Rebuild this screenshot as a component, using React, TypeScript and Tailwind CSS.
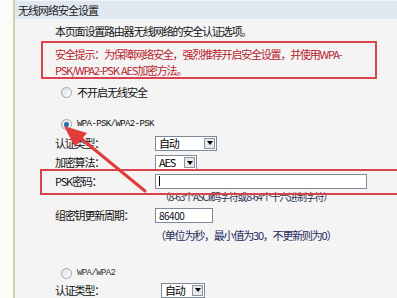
import React from 'react'

const cjk = '"Noto Sans CJK SC", "Liberation Sans", sans-serif'

function Radio({ checked }: { checked?: boolean }) {
  return (
    <span className="w-[11px] h-[11px] rounded-full border border-[#9aa6b4] bg-gradient-to-br from-[#dcdfe4] to-white flex items-center justify-center">
      {checked && <span className="w-[5px] h-[5px] rounded-full bg-[#1f6fb0]" />}
    </span>
  )
}

function Select({ value, width }: { value: string; width: string }) {
  return (
    <div className={`${width} h-[15px] border border-[#7f8a99] bg-white flex items-center justify-between pl-[3px] pr-[1px]`}>
      <span className="text-[11px] leading-none text-black">{value}</span>
      <span className="w-[11px] h-[11px] border border-[#8a94a3] bg-[#e8e8e8] flex items-center justify-center">
        <span className="w-0 h-0 border-l-[3px] border-r-[3px] border-t-[4px] border-l-transparent border-r-transparent border-t-black" />
      </span>
    </div>
  )
}

export default function App() {
  return (
    <div className="relative w-[397px] h-[298px] overflow-hidden bg-[#f4f4f4] flex flex-col" style={{ fontFamily: cjk }}>
      <div className="h-[4px] bg-[#2a58a6]" />
      <div className="flex flex-1">
        <div className="w-[13px] bg-[#fbfbf8]" />
        <div className="flex-1 border-l-2 border-[#d9cfb0] flex flex-col">
          {/* Header */}
          <div className="h-[18px] mt-[1px] bg-[#dfe7f0] flex items-center pl-[3px] text-[11px] tracking-[-1px] text-[#1a1a1a]">
            无线网络安全设置
          </div>

          {/* Body */}
          <div className="flex flex-col text-[11px] tracking-[-1.2px] text-[#111]">
            <div className="h-[20px] pl-[40px] flex items-end">本页面设置路由器无线网络的安全认证选项。</div>

            <div className="ml-[26px] mr-[20px] mt-[2px] h-[38px] border-[2px] border-[#d8434e] pl-[12px] pt-[3px] text-[#b8222b] leading-[16px]">
              <div>安全提示：为保障网络安全，强烈推荐开启安全设置，并使用WPA-</div>
              <div>PSK/WPA2-PSK&nbsp;&nbsp;AES加密方法。</div>
            </div>

            <div className="h-[19px] pl-[46px] flex items-end gap-[5px]">
              <Radio />
              <span className="leading-[12px] text-[11px] tracking-[-1px]">不开启无线安全</span>
            </div>

            <div className="h-[32px] pl-[46px] flex items-end gap-[5px]">
              <Radio checked />
              <span className="text-[9px] tracking-[-0.6px] leading-[12px]" style={{ fontFamily: '"Liberation Mono", monospace' }}>WPA-PSK/WPA2-PSK</span>
            </div>

            <div className="h-[20px] mt-[3px] pl-[40px] flex items-center">
              <span className="w-[100px]">认证类型：</span>
              <Select value="自动" width="w-[62px]" />
            </div>

            <div className="h-[19px] pl-[40px] flex items-center">
              <span className="w-[100px]">加密算法：</span>
              <Select value="AES" width="w-[42px]" />
            </div>

            <div className="h-[18px] pl-[40px] flex items-center">
              <span className="w-[100px]">PSK密码：</span>
              <div className="w-[212px] h-[15px] border border-[#7f8a99] bg-white flex items-center pl-[3px]">
                <span className="w-[1px] h-[10px] bg-black" />
              </div>
            </div>

            <div className="h-[15px] pl-[145px] pb-[3px] flex items-center text-[10px] tracking-[-1.2px] text-[#2b3350]">
              （8-63个ASCII码字符或8-64个十六进制字符）
            </div>

            <div className="h-[21px] pl-[40px] flex items-center">
              <span className="w-[100px]">组密钥更新周期：</span>
              <div className="w-[58px] h-[15px] border border-[#7f8a99] bg-white flex items-center pl-[3px] text-[10px] tracking-[-0.5px]">86400</div>
            </div>

            <div className="h-[18px] pl-[140px] flex items-center text-[#1d2a5e]">
              （单位为秒，最小值为30，不更新则为0）
            </div>

            <div className="h-[36px] pl-[46px] flex items-end gap-[5px] pb-[1px]">
              <Radio />
              <span className="text-[9px] tracking-[-0.6px] leading-[12px] text-[#333]" style={{ fontFamily: '"Liberation Mono", monospace' }}>WPA/WPA2</span>
            </div>

            <div className="h-[20px] pl-[40px] flex items-center">
              <span className="w-[106px]">认证类型：</span>
              <Select value="自动" width="w-[44px]" />
            </div>
          </div>
        </div>
      </div>

      {/* Annotation: red box around PSK row */}
      <div className="absolute left-[40px] top-[169px] w-[370px] h-[26px] border-[2px] border-[#d8434e]" />

      {/* Annotation: red arrow */}
      <svg className="absolute left-0 top-0" width="397" height="298" viewBox="0 0 397 298">
        <line x1="145" y1="191" x2="78" y2="136" stroke="#e23b3b" strokeWidth="3" strokeLinecap="round" />
        <polygon points="64,126 87,133 75,147" fill="#e23b3b" />
      </svg>
    </div>
  )
}
